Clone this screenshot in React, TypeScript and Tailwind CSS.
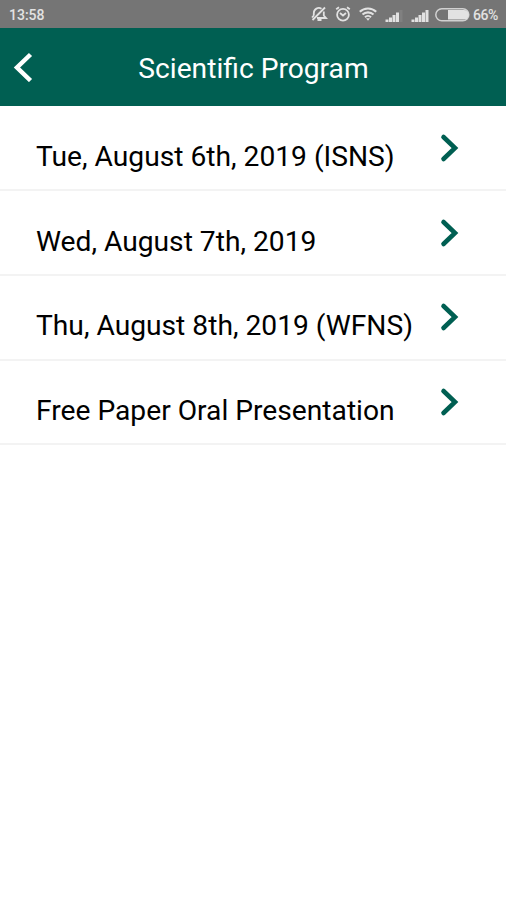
import React from "react";

const days = [
  { title: "Tue, August 6th, 2019 (ISNS)" },
  { title: "Wed, August 7th, 2019" },
  { title: "Thu, August 8th, 2019 (WFNS)" },
  { title: "Free Paper Oral Presentation" },
];

const MutedBell = () => (
  <svg width="18" height="16" viewBox="0 0 18 16" fill="none" stroke="currentColor" strokeWidth="1.800">
    <path d="M3.800 9.500V7a5 5 0 0 1 7.700-4.200M13.800 5.500v4l2.200 2.500H7M3.800 9.500L2 11.500M7.500 14h4" />
    <path d="M2.500 14L15 1.500" />
  </svg>
);

const AlarmClock = () => (
  <svg width="16" height="16" viewBox="0 0 16 16" fill="none" stroke="currentColor" strokeWidth="1.800">
    <circle cx="8" cy="8.700" r="5.900" />
    <path d="M1.200 3.300L4 1.200M14.800 3.300L12 1.200M5 7l3 2.500L11 7" />
  </svg>
);

const Wifi = () => (
  <svg width="18" height="14" viewBox="0 0 18 14" fill="none" stroke="currentColor" strokeWidth="2.100">
    <path d="M0.800 4.800a11.800 11.800 0 0 1 16.400 0M3.500 7.600a7.900 7.900 0 0 1 11 0M6 10.200a4.300 4.300 0 0 1 6 0" />
    <path d="M7 11.200h4L9 13.800z" fill="currentColor" stroke="none" />
  </svg>
);

const Signal = ({ full }: { full?: boolean }) => (
  <svg width="18" height="13" viewBox="0 0 18 13" fill="currentColor">
    <path d="M0.500 10.500h3V13h-3zM4 8.500h3V13H4zM7.500 6h3v7h-3zM11 3.500h3V13h-3z" />
    <path d="M14.500 1h3v12h-3z" opacity={full ? 1 : 0.1} />
  </svg>
);

const Battery = () => (
  <svg width="35" height="14" viewBox="0 0 35 14" fill="none">
    <rect x="0.800" y="0.800" width="33" height="12" rx="6" stroke="currentColor" strokeWidth="1.500" opacity="0.850" />
    <path d="M13 2h16a4.500 4.500 0 0 1 0 9.600H13z" fill="currentColor" />
  </svg>
);

const StatusBar = () => (
  <div className="flex h-7 items-center bg-[#757575] pr-2 pl-[9px] text-[#e2e2e2]">
    <span className="pt-0.5 text-[14px] leading-4 font-medium">13:58</span>
    <div className="ml-auto flex items-center">
      <MutedBell />
      <div className="ml-[7px]">
        <AlarmClock />
      </div>
      <div className="ml-2">
        <Wifi />
      </div>
      <div className="ml-2 pt-0.5">
        <Signal />
      </div>
      <div className="ml-2 pt-0.5">
        <Signal full />
      </div>
      <div className="ml-1.5 pt-0.5">
        <Battery />
      </div>
      <span className="ml-[3px] w-[25px] pt-0.5 text-[14px] leading-4 font-medium tracking-[-0.5px]">66%</span>
    </div>
  </div>
);

const App: React.FC = () => {
  return (
    <div className="min-h-[900px] w-[506px] bg-white font-['Roboto',sans-serif]">
      <StatusBar />

      {/* Header */}
      <header className="grid h-[77.500px] grid-cols-[46px_1fr_45px] items-center bg-[#005f52] text-white">
        <button className="ml-[13px] w-5" aria-label="Back">
          <svg width="20" height="30" viewBox="0 0 20 30" fill="none" stroke="currentColor" strokeWidth="4.500">
            <path d="M17.500 2.500L4 15.500l13.500 13" />
          </svg>
        </button>
        <h1 className="pt-[5px] text-center text-[28.200px] leading-8 whitespace-nowrap">Scientific Program</h1>
      </header>

      {/* Program list */}
      <ul className="pt-px">
        {days.map((day) => (
          <li
            key={day.title}
            className="flex h-[84.700px] justify-between border-b-2 border-[#f3f3f3] pr-[47px] pl-9 text-black"
          >
            <span className="pt-[34.500px] text-[28.200px] leading-8 whitespace-nowrap">{day.title}</span>
            <svg className="mt-[26.500px] shrink-0" width="20" height="30" viewBox="0 0 20 30" fill="none" stroke="#005f52" strokeWidth="4.600" strokeLinecap="round">
              <path d="M4.500 4L16 15L4.500 26" />
            </svg>
          </li>
        ))}
      </ul>
    </div>
  );
};

export default App;
